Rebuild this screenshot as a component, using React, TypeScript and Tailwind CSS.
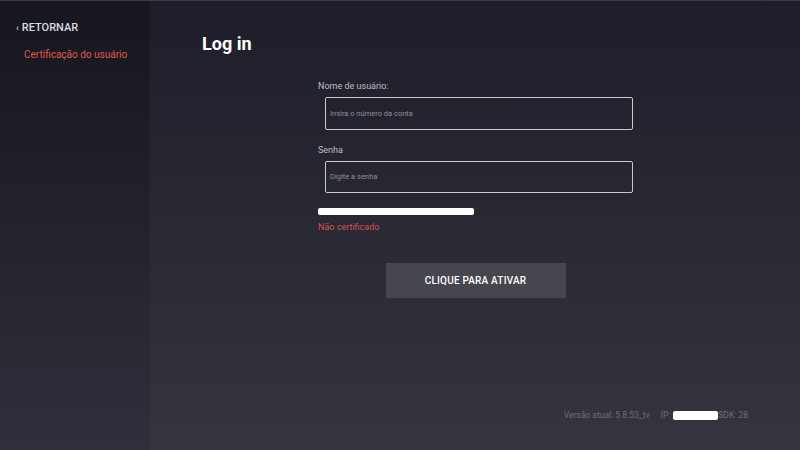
export default function App() {
  return (
    <div
      className="w-[800px] h-[450px] flex overflow-hidden border-t border-[#3a3a48]"
      style={{ fontFamily: "Roboto, 'Noto Sans', sans-serif" }}
    >
      <aside className="w-[150px] h-full bg-gradient-to-b from-[#16161f] to-[#30303c] flex flex-col pt-[20px]">
        <div className="pl-[16px] text-[11px] leading-[14px] font-medium text-[#dcdce0] flex items-center">
          <span className="text-[9px] mr-[3px]">‹</span>RETORNAR
        </div>
        <div className="pl-[24px] mt-[13px] text-[10px] leading-[14px] text-[#e0564c]">
          Certificação do usuário
        </div>
      </aside>

      <main className="flex-1 h-full bg-gradient-to-b from-[#1e1e2a] to-[#35353f] flex flex-col pt-[33px] pl-[52px] pr-[52px] pb-[29px]">
        <h1 className="text-[18px] leading-[20px] font-bold text-white">Log in</h1>

        <form className="w-[315px] ml-[116px] mt-[25px] flex flex-col">
          <label className="text-[9px] leading-[14px] text-[#bdbdc4]">Nome de usuário:</label>
          <div className="ml-[7px] mt-[4px] w-[308px] h-[33px] border-[1.5px] border-[#c9c9d0] rounded-[2px] flex items-center px-[4px]">
            <span className="text-[7.5px] text-[#8e8e98]">Insira o número da conta</span>
          </div>

          <label className="mt-[13px] text-[9px] leading-[14px] text-[#bdbdc4]">Senha</label>
          <div className="ml-[7px] mt-[4px] w-[308px] h-[32px] border-[1.5px] border-[#c9c9d0] rounded-[2px] flex items-center px-[4px]">
            <span className="text-[7.5px] text-[#8e8e98]">Digite a senha</span>
          </div>

          <div className="mt-[15px] w-[156px] h-[7px] bg-white rounded-[2px]" />
          <div className="mt-[5px] text-[9px] leading-[14px] text-[#d9504a]">Não certificado</div>

          <button
            type="button"
            className="mt-[29px] mx-auto w-[180px] h-[35px] bg-[#46464f] text-white text-[10px] font-medium tracking-[0.2px]"
          >
            CLIQUE PARA ATIVAR
          </button>
        </form>

        <div className="mt-auto self-end flex items-center text-[8.5px] leading-[12px] text-[#6e6e78]">
          <span>Versão atual: 5.8.53_tv</span>
          <span className="ml-[11px]">IP:</span>
          <span className="ml-[3px] w-[45px] h-[9px] bg-white rounded-[2px]" />
          <span>SDK: 28</span>
        </div>
      </main>
    </div>
  );
}
